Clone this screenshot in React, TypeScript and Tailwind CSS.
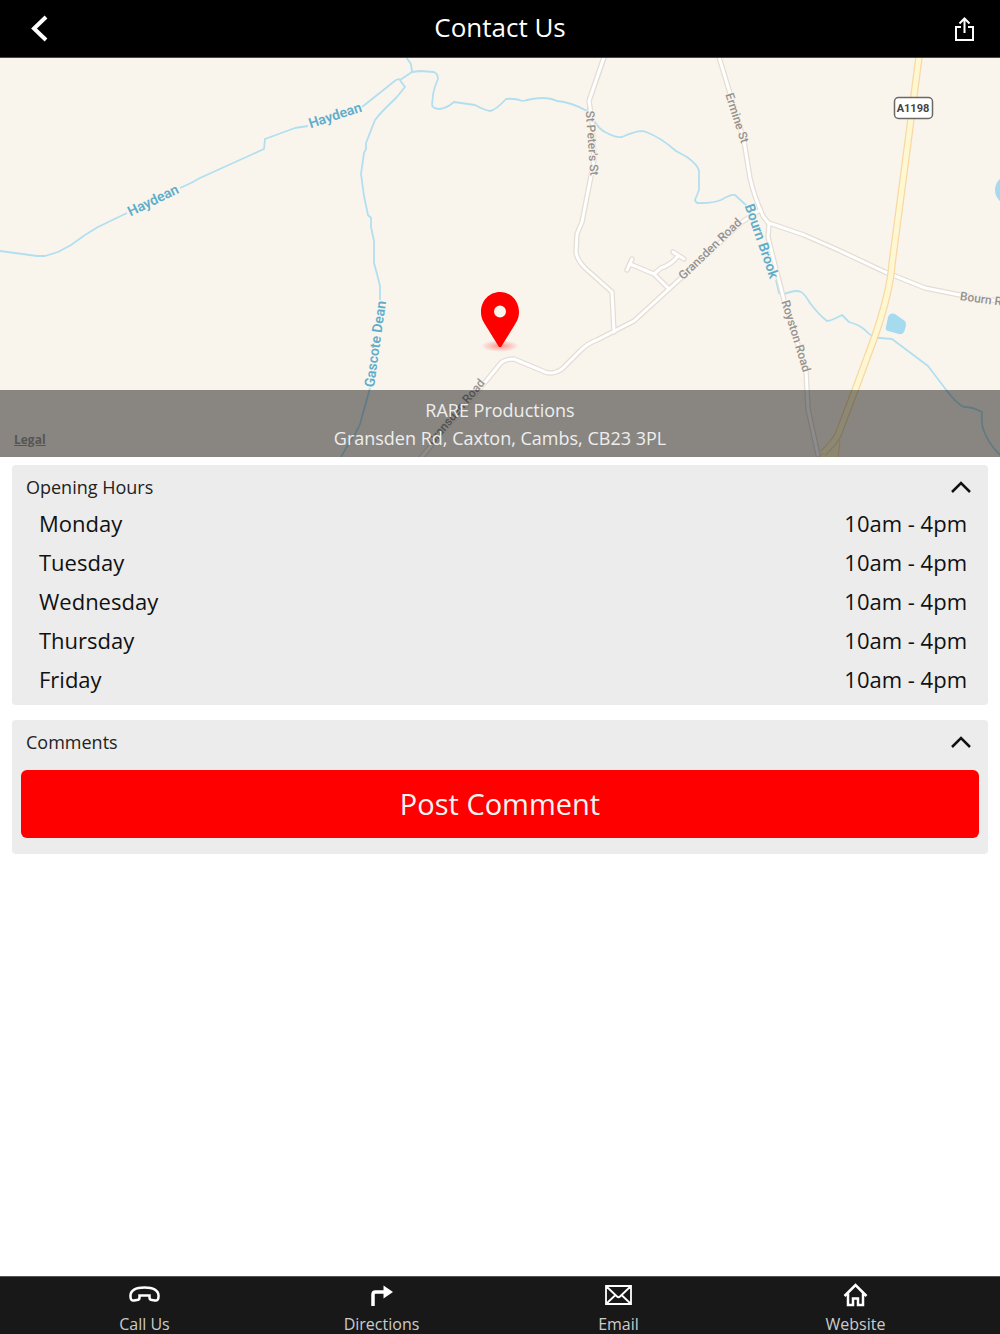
import React, { useState } from 'react';

const openingHours = [
  { day: 'Monday', hours: '10am - 4pm' },
  { day: 'Tuesday', hours: '10am - 4pm' },
  { day: 'Wednesday', hours: '10am - 4pm' },
  { day: 'Thursday', hours: '10am - 4pm' },
  { day: 'Friday', hours: '10am - 4pm' },
];

const rivers = [
  'M0 251L37 256H45L58 252L71 245L85 235L98 227L127 213',
  'M180 188L191 183L200 178L264 149L265 139L295 128L308 126',
  'M362 107L396 80L399 79L405 87L396 98Q380 113 375 120L366 143V149L364 153L361 174L364 196L368 215L371 218V227L374 241V263L377 274L380 286V300',
  'M370 388L360 424Q356 434 349 443L341 457',
  'M406 57L411 64L412 72',
  'M400 80L412 72L420 71L434 72Q438 74 438 79Q434 88 433 95L432 105Q433 109 440 109Q447 108 454 102L475 105Q484 110 490 111Q496 110 506 99Q514 98 523 101Q545 95 557 101Q571 102 587 111L593 119Q599 130 607 133Q616 138 622 137Q640 129 646 132Q660 137 676 151L687 157Q698 165 699 171V190L695 200Q696 204 701 203Q714 203 721 200Q731 194 735 195L748 207',
  'M606 57L590 103L587 111',
  'M776 280L779 293L782 295Q796 289 801 292Q804 293 810 303Q819 315 827 321Q831 321 842 315L849 322Q860 325 865 330Q872 338 880 338L892 339L928 366L947 391Q957 404 964 407Q973 407 982 412Q981 425 984 431Q988 443 1000 455',
];

const roads = [
  'M604 57L589 101L592 120L594 160L591 176L582 222L577 234L576 252Q577 260 585 268L612 292L614 332',
  'M420 459L445 429L487 380L500 364Q504 359 514 359L545 372Q553 375 562 369L580 351Q588 343 597 340L634 321L669 289L700 261L742 222L760 210',
  'M632 259L627 270M630 264L654 274L669 289M654 274L661 268Q671 265 678 256M673 252L684 259',
  'M719 57L729 90L744 141L750 178Q754 196 763 216L769 224L768 237L775 265L784 300L806 370L808 409L818 455',
  'M769 223L804 235L836 249L885 272L925 288L960 295L1004 302',
];

const mainRoad = 'M919 57L905 165L892 264Q890 292 875 336L857 385L838 435Q833 444 823 453';

function MapLabel({ x, y, angle, kind, children }: any) {
  const water = kind === 'water';
  return (
    <text
      transform={`translate(${x} ${y}) rotate(${angle})`}
      textAnchor="middle"
      dominantBaseline="central"
      paintOrder="stroke"
      stroke="#f9f5ed"
      strokeWidth="2"
      fill={water ? '#5fadcb' : '#96928e'}
      className={
        water
          ? "font-['Roboto',sans-serif] text-[14px] font-semibold"
          : "font-['Roboto',sans-serif] text-[12px] font-medium"
      }
    >
      {children}
    </text>
  );
}

function Map() {
  return (
    <svg
      viewBox="0 58 1000 399"
      preserveAspectRatio="xMidYMid slice"
      className="block h-full w-full"
      role="img"
      aria-label="Map of Caxton"
    >
      <rect x="0" y="58" width="1000" height="399" fill="#f9f5ed" />
      <g fill="none" stroke="#b2dff0" strokeWidth="1.800" strokeLinejoin="round">
        {rivers.map((d) => <path key={d} d={d} />)}
      </g>
      <path d="M888 317Q890 312 895 314L905 321Q907 324 905 329Q904 335 899 334L888 331Q885 330 886 327Z" fill="#a6dbef" />
      <circle cx="1010" cy="190" r="15" fill="#a6dbef" />
      <g fill="none" stroke="#e4ddd4" strokeWidth="5.500" strokeLinejoin="round" strokeLinecap="round">
        {roads.map((d) => <path key={d} d={d} />)}
      </g>
      <g fill="none" stroke="#ffffff" strokeWidth="3" strokeLinejoin="round" strokeLinecap="round">
        {roads.map((d) => <path key={d} d={d} />)}
      </g>
      <path d="M834 441Q837 437 840 441L838 458H819Z" fill="#fdf6cf" stroke="#fad7a3" strokeWidth="1" />
      <path d={mainRoad} fill="none" stroke="#fad7a3" strokeWidth="7.500" />
      <path d={mainRoad} fill="none" stroke="#fef8d2" strokeWidth="5" />

      <MapLabel x={153} y={200} angle={-26} kind="water">Haydean</MapLabel>
      <MapLabel x={335} y={115} angle={-18} kind="water">Haydean</MapLabel>
      <MapLabel x={375} y={344} angle={-82} kind="water">Gascote Dean</MapLabel>
      <MapLabel x={762} y={241} angle={71} kind="water">Bourn Brook</MapLabel>
      <MapLabel x={592} y={143} angle={86} kind="road">St Peter's St</MapLabel>
      <MapLabel x={737} y={118} angle={72} kind="road">Ermine St</MapLabel>
      <MapLabel x={710} y={249} angle={-44} kind="road">Gransden Road</MapLabel>
      <MapLabel x={456} y={412} angle={-50} kind="road">Gransden Road</MapLabel>
      <MapLabel x={796} y={336} angle={73} kind="road">Royston Road</MapLabel>
      <MapLabel x={981} y={299} angle={8} kind="road">Bourn R</MapLabel>

      <rect x="894.5" y="97.5" width="38" height="21" rx="4" fill="#fff" stroke="#6b6966" strokeWidth="1.5" />
      <text
        x="913"
        y="108"
        textAnchor="middle"
        dominantBaseline="central"
        fill="#444"
        className="font-['Roboto',sans-serif] text-[11px] font-bold"
      >
        A1198
      </text>

      <defs>
        <radialGradient id="pin-shadow">
          <stop offset="0" stopColor="#ff0000" stopOpacity="0.4" />
          <stop offset="1" stopColor="#ff0000" stopOpacity="0" />
        </radialGradient>
      </defs>
      <ellipse cx="500" cy="346" rx="19" ry="6" fill="url(#pin-shadow)" />
      <path
        d="M500 292C489 292 481 301 481 312C481 318 483 321 486 326L499 347H501L514 326C517 321 519 318 519 312C519 301 511 292 500 292ZM500 305.500A6 6 0 1 1 500 317.500A6 6 0 1 1 500 305.500Z"
        fill="#ff0000"
        fillRule="evenodd"
      />
    </svg>
  );
}

function Panel({ title, children }: { title: string; children: React.ReactNode }) {
  const [open, setOpen] = useState(true);

  return (
    <section className="rounded bg-[#ececec]">
      <h2>
        <button
          type="button"
          aria-expanded={open}
          onClick={() => setOpen(!open)}
          className="flex h-[39px] w-full items-center justify-between pt-[5px] pr-4 pl-3.5 text-lg text-[#222]"
        >
          {title}
          <svg
            width="22"
            height="14"
            viewBox="0 0 22 14"
            fill="none"
            stroke="#111"
            strokeWidth="2.500"
            className={open ? '' : 'rotate-180'}
          >
            <path d="M2 12L11 3L20 12" />
          </svg>
        </button>
      </h2>
      {open && children}
    </section>
  );
}

const actions = [
  {
    label: 'Call Us',
    href: 'tel:',
    icon: (
      <path
        d="M1.500 16.500C1 10 7 7.500 15.500 7.500S30 10 29.500 16.500Q29.500 21 26 20.500L23 20Q20.500 20 20.500 17.500V15.500H10.500V17.500Q10.500 20 8 20L5 20.500Q1.500 21 1.500 16.500Z"
        strokeWidth="2.500"
      />
    ),
  },
  {
    label: 'Directions',
    href: '#directions',
    icon: (
      <>
        <path d="M7 26V14.500Q7 12 9.500 12H18" strokeWidth="3.500" />
        <path d="M17.500 5.500L27 12L17.500 18.500Z" fill="#fff" stroke="none" />
      </>
    ),
  },
  {
    label: 'Email',
    href: 'mailto:',
    icon: (
      <path
        d="M3 6H28V24H3ZM3 6L14 16.500Q15.500 18 17 16.500L28 6M3 24L12.500 15M28 24L18.500 15"
        strokeWidth="1.800"
      />
    ),
  },
  {
    label: 'Website',
    href: '#website',
    icon: (
      <path
        d="M4.500 16L15.500 5L26.500 16M8 13.500V25H13V18.500H18V25H23V13.500"
        strokeWidth="2.500"
      />
    ),
  },
];

export default function App() {
  return (
    <div className="flex min-h-screen flex-col bg-white font-['Open_Sans',sans-serif]">
      <header className="grid h-[58px] grid-cols-[1fr_auto_1fr] items-center border-b border-[#4a4744] bg-black pb-0.5 text-white">
        <button type="button" aria-label="Back" className="ml-7 justify-self-start">
          <svg width="24" height="28" viewBox="0 0 24 28" fill="none" stroke="#fff" strokeWidth="4">
            <path d="M18 3L6 14.500L18 26" />
          </svg>
        </button>
        <h1 className="pb-0.5 text-[26px] leading-8">Contact Us</h1>
        <button type="button" aria-label="Share" className="mr-6 justify-self-end">
          <svg width="24" height="28" viewBox="0 0 24 28" fill="none" stroke="#fff" strokeWidth="2">
            <path d="M9 13H4V26H21V13H16M12.500 19V5M7.500 9.500L12.500 4.500L17.500 9.500" />
          </svg>
        </button>
      </header>

      <div className="relative h-[399px]">
        <Map />
        <div className="absolute inset-x-0 bottom-0 bg-black/45 pt-1.5 pb-[5px] text-center text-lg leading-7 text-[#eee]">
          <p>RARE Productions</p>
          <p>Gransden Rd, Caxton, Cambs, CB23 3PL</p>
          <a
            href="#legal"
            className="absolute bottom-[7px] left-3.5 text-[12px] leading-5 font-bold text-[#555] underline"
          >
            Legal
          </a>
        </div>
      </div>

      <main className="flex flex-1 flex-col gap-[15px] px-3 pt-2">
        <Panel title="Opening Hours">
          <div className="pr-[21px] pb-1.5 pl-[27px]">
            <table className="w-full text-[22px] leading-[39px] text-[#111]">
              <tbody>
                {openingHours.map(({ day, hours }) => (
                  <tr key={day}>
                    <th scope="row" className="p-0 text-left font-normal">{day}</th>
                    <td className="p-0 text-right">{hours}</td>
                  </tr>
                ))}
              </tbody>
            </table>
          </div>
        </Panel>

        <Panel title="Comments">
          <div className="px-[9px] pt-[11px] pb-4">
            <button type="button" className="h-[68px] w-full rounded-md bg-[#ff0000] text-[29px] text-[#f5f5f5]">
              Post Comment
            </button>
          </div>
        </Panel>
      </main>

      <nav className="grid h-[58px] grid-cols-4 border-t border-[#555] bg-[#181818] px-[26px]">
        {actions.map(({ label, href, icon }) => (
          <a key={label} href={href} className="flex flex-col items-center pt-[3px] text-base leading-6 text-[#ccc]">
            <svg width="32" height="28" viewBox="0 0 32 28" fill="none" stroke="#fff" className="shrink-0">
              {icon}
            </svg>
            <span className="pt-1">{label}</span>
          </a>
        ))}
      </nav>
    </div>
  );
}
